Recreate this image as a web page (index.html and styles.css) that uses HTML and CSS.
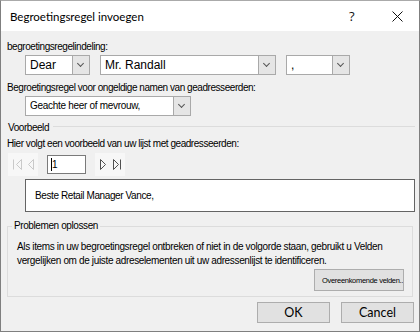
FILE: index.html
```html
<!DOCTYPE html>
<html lang="nl">
<head>
    <meta charset="UTF-8">
    <title>Begroetingsregel invoegen</title>
    <link rel="stylesheet" href="styles.css">
</head>
<body>
    <div class="dialog">
        <!-- Title bar -->
        <div class="titlebar">
            <span class="title">Begroetingsregel invoegen</span>
            <span class="help">?</span>
            <span class="close">
                <svg width="11" height="11" viewBox="0 0 11 11"><path d="M0.5 0.5 L10.5 10.5 M10.5 0.5 L0.5 10.5" stroke="#111" stroke-width="1"/></svg>
            </span>
        </div>

        <div class="content">
            <div class="label first-label">begroetingsregelindeling:</div>
            <div class="combo-row">
                <div class="combo combo-dear"><span class="combo-text">Dear</span><span class="combo-btn"></span></div>
                <div class="combo combo-name"><span class="combo-text">Mr. Randall</span><span class="combo-btn"></span></div>
                <div class="combo combo-punct"><span class="combo-text">,</span><span class="combo-btn"></span></div>
            </div>

            <div class="label second-label">Begroetingsregel voor ongeldige namen van geadresseerden:</div>
            <div class="combo-row">
                <div class="combo combo-invalid"><span class="combo-text">Geachte heer of mevrouw,</span><span class="combo-btn"></span></div>
            </div>

            <!-- Preview -->
            <div class="section-head">
                <span class="label">Voorbeeld</span>
                <span class="section-line"></span>
            </div>
            <div class="label preview-label">Hier volgt een voorbeeld van uw lijst met geadresseerden:</div>
            <div class="nav-row">
                <div class="nav-pair">
                    <svg width="30" height="23" viewBox="0 0 30 23">
                        <path d="M5.5 6.5 V16.5 M13.5 6.5 L8.5 11.5 L13.5 16.5 Z" fill="none" stroke="#c9c9c9"/>
                        <path d="M25.5 6.5 L20.5 11.5 L25.5 16.5 Z" fill="none" stroke="#c9c9c9"/>
                    </svg>
                </div>
                <div class="record-box"><span class="caret"></span>1</div>
                <div class="nav-pair">
                    <svg width="30" height="23" viewBox="0 0 30 23">
                        <path d="M5.5 6.5 L10.5 11.5 L5.5 16.5 Z" fill="none" stroke="#505050"/>
                        <path d="M18.5 6.5 L23.5 11.5 L18.5 16.5 Z M25.5 6.5 V16.5" fill="none" stroke="#505050"/>
                    </svg>
                </div>
            </div>
            <div class="preview-box">Beste Retail Manager Vance,</div>

            <!-- Troubleshooting -->
            <div class="group">
                <span class="group-title">Problemen oplossen</span>
                <p class="group-text">Als items in uw begroetingsregel ontbreken of niet in de volgorde staan, gebruikt u Velden vergelijken om de juiste adreselementen uit uw adressenlijst te identificeren.</p>
                <div class="group-actions">
                    <button class="small-btn">Overeenkomende velden...</button>
                </div>
            </div>

            <div class="footer">
                <button class="btn">OK</button>
                <button class="btn">Cancel</button>
            </div>
        </div>
    </div>
</body>
</html>
```

FILE: styles.css
```css
body {
    margin: 0;
    padding: 0;
    background-color: #fff;
    font-family: "Liberation Sans", Arial, sans-serif;
}
.dialog {
    width: 420px;
    height: 332px;
    box-sizing: border-box;
    border: 1px solid #7f7f7f;
    border-top-color: #aaa;
    background-color: #f0f0f0;
    overflow: hidden;
}
.titlebar {
    height: 30px;
    background-color: #fff;
    display: flex;
    align-items: center;
}
.title {
    flex: 1;
    padding-left: 9px;
    font-family: Lato, sans-serif;
    font-size: 11.5px;
    color: #000;
}
.help {
    width: 14px;
    margin-right: 29px;
    font-family: "Open Sans", sans-serif;
    font-size: 13px;
    color: #111;
}
.close {
    width: 11px;
    height: 11px;
    margin-right: 16px;
    display: flex;
}
.content {
    padding: 0 4px 0 6px;
}
.label {
    font-size: 10px;
    color: #000;
    line-height: 12px;
    letter-spacing: -0.45px;
}
.first-label {
    padding-top: 10px;
}
.combo-row {
    display: flex;
    padding-left: 18px;
    margin-top: 2px;
}
.combo {
    height: 20px;
    box-sizing: border-box;
    border: 1px solid #a9a9a9;
    background-color: #fff;
    display: flex;
    margin-right: 10px;
}
.combo-text {
    flex: 1;
    padding-left: 4px;
    font-size: 12px;
    line-height: 18px;
    color: #000;
}
.combo-btn {
    width: 16px;
    background-color: #e5e5e5;
    border-left: 1px solid #a9a9a9;
    position: relative;
}
.combo-btn::after {
    content: "";
    position: absolute;
    left: 5px;
    top: 5px;
    width: 4px;
    height: 4px;
    border-right: 1px solid #555;
    border-bottom: 1px solid #555;
    transform: rotate(45deg);
}
.combo-dear { width: 65px; }
.combo-name { width: 176px; }
.combo-punct { width: 64px; }
.combo-invalid { width: 166px; }
.combo-invalid .combo-text { font-size: 10px; letter-spacing: -0.3px; }
.second-label {
    margin-top: 7px;
}
.section-head {
    display: flex;
    align-items: center;
    margin-top: 6px;
    padding-left: 1px;
}
.section-line {
    flex: 1;
    height: 1px;
    background-color: #dcdcdc;
    margin: 0 0 3px 4px;
}
.preview-label {
    margin-top: 4px;
}
.nav-row {
    display: flex;
    align-items: center;
    margin-top: 3px;
    padding-left: 1px;
    height: 23px;
}
.nav-pair {
    width: 30px;
    height: 23px;
    background-color: #f7f7f7;
    display: flex;
}
.record-box {
    width: 39px;
    height: 19px;
    box-sizing: border-box;
    border: 1px solid #7a7a7a;
    background-color: #fff;
    margin: 0 9px;
    font-size: 10px;
    line-height: 17px;
    padding-left: 3px;
    display: flex;
    align-items: center;
}
.caret {
    width: 1px;
    height: 13px;
    background-color: #000;
}
.preview-box {
    margin: 3px 0 0 18px;
    height: 33px;
    box-sizing: border-box;
    border: 1px solid #646464;
    background-color: #fff;
    padding-left: 9px;
    font-size: 10px;
    letter-spacing: -0.4px;
    line-height: 31px;
}
.group {
    position: relative;
    margin: 14px 2px 0 0;
    padding: 13px 6px 0 9px;
    border: 1px solid #dcdcdc;
    height: 71px;
    box-sizing: border-box;
}
.group-title {
    position: absolute;
    top: -7px;
    left: 4px;
    padding: 0 2px;
    background-color: #f0f0f0;
    font-size: 10px;
    line-height: 12px;
    letter-spacing: -0.4px;
}
.group-text {
    margin: 0;
    font-size: 10px;
    letter-spacing: -0.35px;
    line-height: 14px;
}
.group-actions {
    display: flex;
    justify-content: flex-end;
    margin-top: 1px;
    padding-right: 2px;
}
.small-btn {
    width: 90px;
    height: 22px;
    border: 1px solid #adadad;
    background-color: #e1e1e1;
    font-family: "Liberation Sans", Arial, sans-serif;
    font-size: 7.5px;
    letter-spacing: -0.3px;
    white-space: nowrap;
    overflow: hidden;
    text-align: left;
    padding: 0 0 0 7px;
}
.footer {
    display: flex;
    justify-content: flex-end;
    gap: 11px;
    margin-top: 5px;
    padding-right: 1px;
}
.btn {
    width: 73px;
    height: 21px;
    border: 1px solid #adadad;
    background-color: #e1e1e1;
    font-family: Lato, sans-serif;
    font-size: 12.5px;
    padding: 0;
    color: #000;
}
```
